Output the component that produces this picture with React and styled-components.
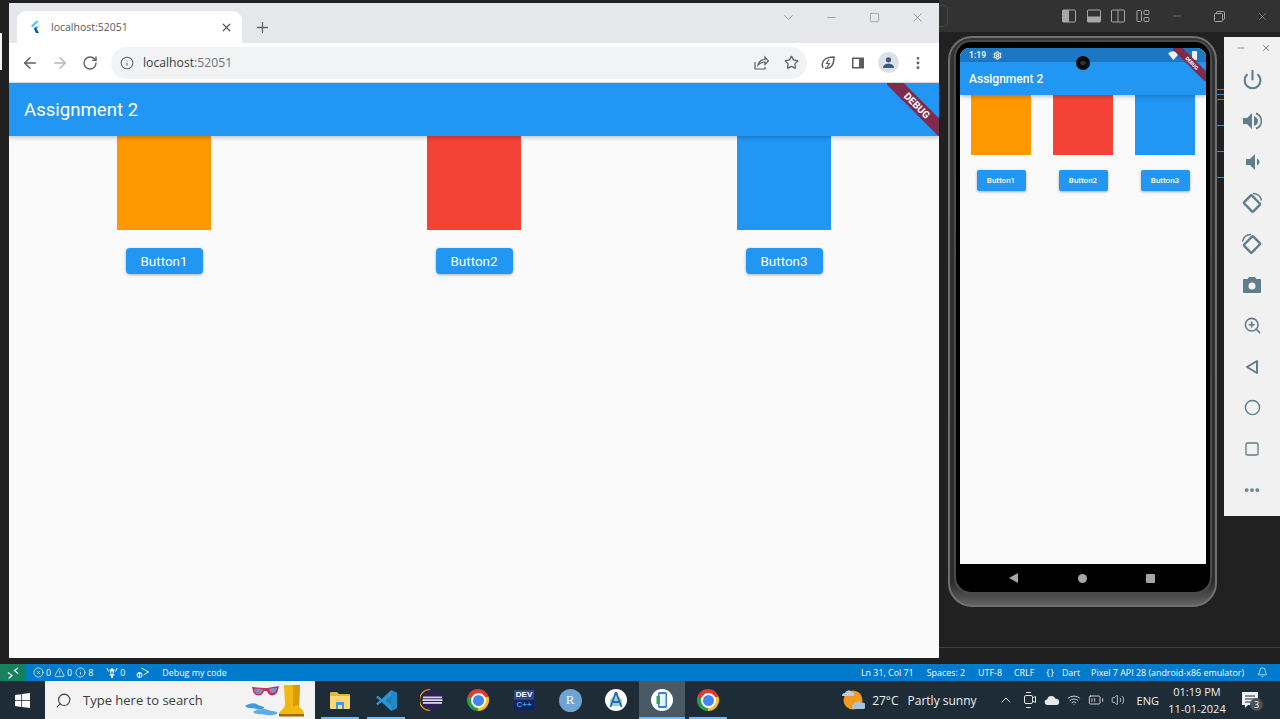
import styled, { createGlobalStyle } from 'styled-components'
import {
  ArrowLeft, ArrowRight, RotateCw, Info, Star, X, Plus, ChevronDown, ChevronUp, Minus, Square,
  EllipsisVertical, Ellipsis, Power, ZoomIn, Circle, Triangle, Search, XCircle, AlertTriangle,
  Bell, Volume2, BatteryMedium, Wifi, Settings,
} from 'lucide-react'

const Global = createGlobalStyle`
  html, body { margin: 0; padding: 0; background: #202020; }
  * { box-sizing: border-box; }
`

const Page = styled.div`
  width: 1280px;
  height: 719px;
  display: flex;
  flex-direction: column;
  overflow: hidden;
  font-family: Roboto, sans-serif;
`
const Workspace = styled.div`
  height: 664px;
  flex: none;
  display: flex;
  background: #202020;
`
const Gutter = styled.div`
  width: 9px;
  flex: none;
  padding-top: 33px;
`
const GutterMark = styled.div`
  width: 2px;
  height: 37px;
  background: #f2f2f2;
`

/* chrome window */
const Browser = styled.div`
  width: 930px;
  height: 655px;
  flex: none;
  margin-top: 3px;
  display: flex;
  flex-direction: column;
  background: #fafafa;
`
const TabStrip = styled.div`
  height: 40px;
  flex: none;
  display: flex;
  align-items: flex-end;
  padding-left: 8px;
  background: #e6e7ea;
  color: #5f6368;
`
const Tab = styled.div`
  width: 225px;
  height: 32px;
  display: flex;
  align-items: center;
  padding: 0 9px 0 11px;
  background: #fff;
  border-radius: 9px 9px 0 0;
  font: 10.5px 'Open Sans', sans-serif;
  color: #555a5f;
`
const TabTitle = styled.span`
  flex: 1;
  margin-left: 9px;
`
const NewTab = styled.div`
  width: 40px;
  height: 32px;
  display: flex;
  align-items: center;
  justify-content: center;
`
const WindowControls = styled.div`
  margin-left: auto;
  height: 100%;
  display: flex;
  align-items: flex-start;
  padding: 6px 0 0;
  color: #7f8185;
`
const WindowButton = styled.div`
  width: 43px;
  height: 16px;
  display: flex;
  align-items: center;
  justify-content: center;
`
const Toolbar = styled.div`
  height: 40px;
  flex: none;
  display: flex;
  align-items: center;
  padding-left: 6px;
  background: #fff;
  border-bottom: 1px solid #d4d6d9;
  color: #5f6368;
`
const ToolButton = styled.div`
  width: 30px;
  height: 30px;
  display: flex;
  align-items: center;
  justify-content: center;
  color: ${p => p.$off ? '#b4b6b9' : '#5b5e62'};
`
const Omnibox = styled.div`
  width: 696px;
  height: 32px;
  margin: 0 6px;
  display: flex;
  align-items: center;
  padding: 0 1px 0 9px;
  background: #f1f3f4;
  border-radius: 16px;
`
const Url = styled.div`
  flex: 1;
  margin-left: 9px;
  font: 12.2px 'Open Sans', sans-serif;
  color: #3a3d40;
  span { color: #6f7275; }
`
const Avatar = styled.div`
  width: 21px;
  height: 21px;
  display: flex;
  align-items: center;
  justify-content: center;
  border-radius: 50%;
  background: #dde1e7;
`

const FlutterView = styled.div`
  flex: 1;
  display: flex;
  flex-direction: column;
  position: relative;
  overflow: hidden;
`
const AppBar = styled.div`
  height: ${p => p.$small ? 33 : 53}px;
  flex: none;
  display: flex;
  align-items: center;
  padding-left: ${p => p.$small ? 9 : 15}px;
  background: #2196f3;
  color: #fff;
  font-size: ${p => p.$small ? 12 : 18.6}px;
  font-weight: ${p => p.$small ? 500 : 400};
  box-shadow: 0 2px 4px rgba(0, 0, 0, .2);
  z-index: 1;
`
const BoxRow = styled.div`
  display: flex;
  justify-content: space-around;
`
const Column = styled.div`
  display: flex;
  flex-direction: column;
  align-items: center;
`
const Swatch = styled.div`
  width: ${p => p.$small ? 60 : 94}px;
  height: ${p => p.$small ? 60 : 94}px;
  background: ${p => p.$color};
`
const AppButton = styled.div`
  width: ${p => p.$small ? 49 : 77}px;
  height: ${p => p.$small ? 21 : 26}px;
  margin-top: ${p => p.$small ? 15 : 18}px;
  display: flex;
  align-items: center;
  justify-content: center;
  background: #2196f3;
  border-radius: ${p => p.$small ? 2 : 4}px;
  color: #fff;
  font-size: ${p => p.$small ? 8 : 13.4}px;
  font-weight: ${p => p.$small ? 500 : 400};
  box-shadow: 0 1px 3px rgba(0, 0, 0, .3);
`
const BannerCorner = styled.div`
  position: absolute;
  top: 0;
  right: 0;
  width: ${p => p.$small ? 33 : 52}px;
  height: ${p => p.$small ? 33 : 53}px;
  overflow: hidden;
  z-index: 2;
`
const Banner = styled.div`
  position: absolute;
  top: ${p => p.$small ? 11 : 15.5}px;
  left: ${p => p.$small ? -11 : -20}px;
  width: ${p => p.$small ? 60 : 100}px;
  height: ${p => p.$small ? 8 : 13}px;
  line-height: ${p => p.$small ? 8 : 13}px;
  text-align: center;
  transform: rotate(45deg);
  background: #7f2b4e;
  color: #fff;
  font-size: ${p => p.$small ? 5 : 10}px;
  font-weight: 700;
`

/* vs code chrome around the emulator */
const RightPane = styled.div`
  flex: 1;
  display: flex;
  flex-direction: column;
`
const IdeTitleBar = styled.div`
  height: 32px;
  flex: none;
  display: flex;
  align-items: center;
  background: #323232;
  color: #a8a8a8;
`
const IdeSearchEnd = styled.div`
  width: 9px;
  height: 22px;
  margin-right: 109px;
  border: 1px solid #454545;
  border-left: 0;
  border-radius: 0 5px 5px 0;
`
const LayoutButton = styled.div`
  width: 24.5px;
  display: flex;
  justify-content: center;
`
const IdeWindowButton = styled.div`
  width: 43px;
  display: flex;
  justify-content: center;
  margin-left: ${p => p.$first ? 'auto' : 0};
`
const Stage = styled.div`
  height: 616px;
  flex: none;
  display: flex;
  align-items: flex-start;
  padding: 4px 0 0 9px;
  background: #212121;
  border-bottom: 1px solid #424242;
`
const Phone = styled.div`
  width: 269px;
  height: 571px;
  flex: none;
  padding: 4px 5px 13px 6px;
  border: 2px solid #707070;
  border-radius: 24px;
  background: linear-gradient(#333, #2c2c2c 96%, #626262);
`
const Bezel = styled.div`
  height: 100%;
  display: flex;
  flex-direction: column;
  padding: 6px 4px 0;
  background: #000;
  border-radius: 15px;
  box-shadow: 0 0 0 2px #4a4a4a;
`
const Screen = styled.div`
  height: 516px;
  flex: none;
  display: flex;
  flex-direction: column;
  position: relative;
  overflow: hidden;
  background: #fafafa;
  border-radius: 9px 9px 0 0;
`
const PhoneStatus = styled.div`
  height: 14px;
  flex: none;
  display: flex;
  align-items: center;
  gap: 7px;
  padding: 0 9px;
  background: #1c78c4;
  color: #e4eef6;
  font-size: 8.5px;
  font-weight: 700;
`
const StatusRight = styled.div`
  margin-left: auto;
  display: flex;
  align-items: center;
  gap: 3px;
`
const PhoneBattery = styled.div`
  width: 5px;
  height: 9px;
  background: #f2f2f2;
  border-radius: 1px;
`
const Camera = styled.div`
  position: absolute;
  top: 8px;
  left: 116px;
  width: 14px;
  height: 14px;
  border-radius: 50%;
  background: #0b0b0b;
  z-index: 3;
  &::after {
    content: '';
    position: absolute;
    inset: 5px 4px;
    border-radius: 50%;
    background: #33302a;
  }
`
const PhoneNav = styled.div`
  flex: 1;
  display: flex;
  align-items: center;
  justify-content: space-between;
  padding: 0 51px 0 49px;
  color: #a6a6a6;
`
const NavDot = styled.div`
  width: 9px;
  height: 9px;
  background: #a6a6a6;
  border-radius: ${p => p.$round ? '50%' : '1px'};
`
const NavBack = styled.div`
  width: 0;
  height: 0;
  border-style: solid;
  border-width: 5px 9px 5px 0;
  border-color: transparent #a6a6a6 transparent transparent;
`
const Minimap = styled.div`
  width: 7px;
  flex: none;
  padding-top: 53px;
  display: flex;
  flex-direction: column;
`
const MapMark = styled.div`
  height: 1px;
  margin-top: ${p => p.$gap}px;
  background: ${p => p.$color || '#3f86cc'};
`
const EmulatorPanel = styled.div`
  width: 56px;
  height: 479px;
  flex: none;
  margin-top: 1px;
  display: flex;
  flex-direction: column;
  align-items: center;
  background: #f1f1f1;
  color: #5f7d8c;
`
const PanelHead = styled.div`
  width: 100%;
  height: 22px;
  flex: none;
  display: flex;
  align-items: center;
  justify-content: space-between;
  padding: 0 9px 0 12px;
  color: #6f8794;
`
const PanelButton = styled.div`
  height: 41px;
  flex: none;
  display: flex;
  align-items: center;
  justify-content: center;
  &:first-of-type { margin-top: 1px; }
`

/* bottom bars */
const StatusBar = styled.div`
  height: 17px;
  flex: none;
  display: flex;
  align-items: center;
  background: #007acc;
  color: #fff;
  font: 8.9px 'Open Sans', sans-serif;
`
const RemoteTag = styled.div`
  width: 26px;
  height: 100%;
  display: flex;
  align-items: center;
  justify-content: center;
  background: #16825d;
`
const StatusLeft = styled.div`
  display: flex;
  align-items: center;
  margin-left: 7px;
`
const StatusItem = styled.span`
  display: inline-flex;
  align-items: center;
  gap: ${p => p.$gap ?? 2}px;
  margin-left: ${p => p.$ml || 0}px;
  white-space: nowrap;
`
const Braces = styled.span`
  letter-spacing: 1px;
`
const StatusEnd = styled.div`
  margin-left: auto;
  padding-right: 12px;
  display: flex;
  align-items: center;
`
const Taskbar = styled.div`
  height: 38px;
  flex: none;
  display: flex;
  align-items: stretch;
  background: #1d2c37;
  color: #f0f0f0;
  font-family: 'Open Sans', sans-serif;
`
const StartButton = styled.div`
  width: 45px;
  display: flex;
  align-items: center;
  justify-content: center;
`
const SearchBox = styled.div`
  width: 270px;
  margin-right: 2px;
  display: flex;
  align-items: center;
  padding: 0 8px 0 10px;
  background: #f3f3f3;
  color: #3c3c3c;
  font-size: 13px;
`
const SearchText = styled.span`
  flex: 1;
  margin-left: 11px;
`
const TaskItem = styled.div`
  width: 46px;
  display: flex;
  align-items: center;
  justify-content: center;
  position: relative;
  background: ${p => p.$active ? '#4a5a64' : 'transparent'};
  &::after {
    content: '';
    display: ${p => p.$open ? 'block' : 'none'};
    position: absolute;
    left: ${p => p.$active ? 0 : 4}px;
    right: ${p => p.$active ? 0 : 4}px;
    bottom: 0;
    height: 2px;
    background: #76b9ed;
  }
`
const ChromeDisc = styled.div`
  width: 22px;
  height: 22px;
  display: flex;
  align-items: center;
  justify-content: center;
  border-radius: 50%;
  background: conic-gradient(from 290deg, #e33b2e 0 140deg, #fbc02d 140deg 250deg, #2f9e44 250deg 360deg);
  &::after {
    content: '';
    width: 11px;
    height: 11px;
    border-radius: 50%;
    border: 2px solid #fff;
    background: #4285f4;
  }
`
const DevTile = styled.div`
  width: 22px;
  height: 22px;
  display: flex;
  flex-direction: column;
  align-items: center;
  background: linear-gradient(#33438a 50%, #12235c 50%);
  border: 1px solid #1a2a60;
  color: #fff;
  font: 700 8px/10px 'Liberation Sans', sans-serif;
  span { color: #28a7e8; }
`
const RBall = styled.div`
  width: 23px;
  height: 23px;
  display: flex;
  align-items: center;
  justify-content: center;
  border-radius: 50%;
  background: #6fa3d4;
  color: #f2f6fa;
  font: 13px 'Liberation Serif', serif;
`
const WhiteDisc = styled.div`
  width: 22px;
  height: 22px;
  display: flex;
  align-items: center;
  justify-content: center;
  border-radius: 50%;
  background: #fff;
`
const Tray = styled.div`
  margin-left: auto;
  display: flex;
  align-items: center;
`
const TrayText = styled.span`
  margin-left: ${p => p.$ml || 0}px;
  white-space: nowrap;
  color: #f0f0f0;
  font-size: ${p => p.$size || 12}px;
`
const TrayIcon = styled.div`
  width: 22px;
  margin-left: ${p => p.$ml || 0}px;
  display: flex;
  justify-content: center;
  color: #e6e6e6;
`
const Clock = styled.div`
  width: 66px;
  margin-left: 5px;
  text-align: center;
  font-size: 11px;
  line-height: 17px;
`
const Notify = styled.div`
  width: 40px;
  position: relative;
  display: flex;
  justify-content: center;
  margin-right: 10px;
`
const NotifyCount = styled.div`
  position: absolute;
  top: 8px;
  left: 20px;
  width: 13px;
  height: 13px;
  border-radius: 50%;
  background: #4a4f53;
  color: #fff;
  font-size: 9px;
  line-height: 13px;
  text-align: center;
`

const FlutterLogo = () => (
  <svg width="14" height="14" viewBox="0 0 14 14">
    <polygon points="8,1 11,1 4.5,7.5 3,6" fill="#4fc3f7" />
    <polygon points="8,6.5 11,6.5 7.5,10 6,8.5" fill="#29b6f6" />
    <polygon points="6,8.5 7.5,7 11,13 8,13" fill="#01579b" />
  </svg>
)

const ShareIcon = () => (
  <svg width="16" height="16" viewBox="0 0 16 16" fill="none" stroke="currentColor" strokeWidth="1.2">
    <path d="M2 7v7h10v-2" />
    <path d="M5 10c1-4 4-5.500 7-5.500V2l3.500 4L12 9.500V7c-3 0-5 1-7 3z" />
  </svg>
)
const LeafIcon = () => (
  <svg width="16" height="16" viewBox="0 0 16 16" fill="none" stroke="currentColor" strokeWidth="1.5">
    <path d="M3 13C1 8 3 2 14 2c0 9-4 12-9 11" />
    <path d="M9 4.500L6.500 8.500h3L7 12" strokeWidth="1.200" />
  </svg>
)
const SidePanelIcon = () => (
  <svg width="14" height="14" viewBox="0 0 14 14">
    <rect x="1" y="1.500" width="12" height="11" fill="#5b5e62" />
    <rect x="2.500" y="3" width="5.500" height="8" fill="#fff" />
  </svg>
)
const PersonIcon = () => (
  <svg width="13" height="13" viewBox="0 0 13 13" fill="#3f5a78">
    <circle cx="6.500" cy="3.800" r="2.600" />
    <path d="M1 12c0-3 2.500-4.200 5.500-4.200S12 9 12 12z" />
  </svg>
)

const LayoutIcon = ({ kind }) => (
  <svg width="14" height="14" viewBox="0 0 14 14" fill="none" stroke="currentColor">
    {kind === 'grid' ? (
      <>
        <rect x="1" y="1.500" width="4.500" height="11" rx="1" />
        <rect x="8" y="1.500" width="5" height="4" rx="1" />
        <rect x="8" y="8.500" width="5" height="4" rx="1" />
      </>
    ) : (
      <>
        <rect x=".5" y="1" width="13" height="12" rx="1" />
        {kind === 'left' && <rect x="1" y="1.500" width="5.500" height="11" fill="currentColor" />}
        {kind === 'bottom' && <rect x="1" y="8" width="12" height="4.500" fill="currentColor" />}
        {kind === 'split' && <line x1="7" y1="1" x2="7" y2="13" />}
      </>
    )}
  </svg>
)
const RestoreIcon = () => (
  <svg width="11" height="11" viewBox="0 0 11 11" fill="none" stroke="currentColor">
    <rect x=".5" y="2.500" width="8" height="8" rx="1" />
    <path d="M2.500 2.500v-1a1 1 0 0 1 1-1h6a1 1 0 0 1 1 1v6a1 1 0 0 1-1 1h-1" />
  </svg>
)

const PhoneWifi = () => (
  <svg width="11" height="9" viewBox="0 0 11 9" fill="#f2f2f2">
    <path d="M0 2.500C3 -.5 8 -.5 11 2.500L5.500 9z" />
  </svg>
)

const SpeakerIcon = ({ loud }) => (
  <svg width="20" height="20" viewBox="0 0 20 20" fill="currentColor">
    <path d={loud ? 'M1 7v6h4l5 5V2L5 7z' : 'M4 7v6h4l5 5V2L8 7z'} />
    {loud
      ? <path d="M12 5v10c3-1 4-3 4-5s-1-4-4-5zM14 1.500v2c3 1 4.500 3.500 4.500 6.500s-1.500 5.500-4.500 6.500v2c4-1 6-4.500 6-8.500s-2-7.500-6-8.500z" />
      : <path d="M15 6.500v7c1.500-.8 2.500-2 2.500-3.500S16.500 7.300 15 6.500z" />}
  </svg>
)
const RotateIcon = ({ flip }) => (
  <svg width="22" height="22" viewBox="0 0 22 22" fill="none" stroke="currentColor" strokeWidth="2.400"
    style={flip ? { transform: 'scaleX(-1)' } : undefined}>
    <rect x="5.500" y="5" width="11" height="13" rx="1" transform="rotate(-45 11 11.500)" />
    <path d="M12 1.500c4 0 7.500 2.500 8.500 7" strokeWidth="1.500" />
  </svg>
)
const CameraIcon = () => (
  <svg width="20" height="20" viewBox="0 0 20 20">
    <path fill="currentColor" d="M7 2L5.500 4H2a1 1 0 0 0-1 1v12a1 1 0 0 0 1 1h16a1 1 0 0 0 1-1V5a1 1 0 0 0-1-1h-3.500L13 2z" />
    <circle cx="10" cy="11" r="3.500" fill="#f1f1f1" />
  </svg>
)
const NavOutline = () => (
  <svg width="18" height="18" viewBox="0 0 18 18" fill="none" stroke="currentColor" strokeWidth="2">
    <path d="M14 3v12L4 9z" strokeLinejoin="round" />
  </svg>
)

const RemoteIcon = () => (
  <svg width="12" height="12" viewBox="0 0 12 12" fill="none" stroke="#fff" strokeWidth="1.200">
    <path d="M1 5.500l4 3-3.500 3M11 1L7.500 3.500 11 6.500" />
  </svg>
)
const PortsIcon = () => (
  <svg width="12" height="12" viewBox="0 0 12 12" fill="none" stroke="#fff">
    <path d="M1 1l1.500 3.500M11 1L9.500 4.500M4 2.500l2 8.500 2-8.500M3.500 8h5" />
    <circle cx="6" cy="3" r="1.200" fill="#fff" />
  </svg>
)
const DebugIcon = () => (
  <svg width="13" height="12" viewBox="0 0 13 12" fill="none" stroke="#fff">
    <path d="M5.500 1l7 4-5 3" />
    <circle cx="3.500" cy="8" r="2.500" />
    <path d="M1 6.500h5M3.500 5.500v5" />
  </svg>
)

const WinLogo = () => (
  <svg width="15" height="15" viewBox="0 0 15 15" fill="#fff">
    <path d="M0 2.100l6.300-.9v6H0zM7.100 1.100L15 0v7.200H7.100zM0 8h6.300v6L0 13.100zM7.100 8H15v7l-7.900-1.100z" />
  </svg>
)
const PromoArt = () => (
  <svg width="62" height="36" viewBox="0 0 62 36">
    <path d="M7 5l12 1h3l12-2-1 4c-1 6-8 7-10 3l-1-2h-3l-1 2c-2 4-9 3-10-2z" fill="#c2335b" />
    <path d="M9 7.500c2-1 7-1 9 0-1 6-8 6-9 0zM24 7c2-1 6-1 8-1-1 6-7 7-8 1z" fill="#7f8fc0" />
    <path d="M0 24c4-3 10-4 13-1l6 2c1 2-3 3-7 2s-9 0-12-3z" fill="#3f9bdc" />
    <path d="M8 30c4-3 12-4 15-2l9 2c2 2-4 4-10 3s-11 0-14-3z" fill="#5aaee6" />
    <path d="M39 3h16l-1 22c3 2 5 4 5 7l-1 2H37c-2 0-3-1-3-3 2-3 5-4 6-8z" fill="#f2b90f" />
    <path d="M48 3h7l-1 20-6 1z" fill="#d99a06" />
    <rect x="34" y="32" width="25" height="2.500" fill="#9a6c04" />
  </svg>
)
const FolderIcon = () => (
  <svg width="22" height="20" viewBox="0 0 22 20">
    <path fill="#e8b53a" d="M1 3a1 1 0 0 1 1-1h6l2 2h10a1 1 0 0 1 1 1v3H1z" />
    <path fill="#fcd772" d="M1 6h20v12a1 1 0 0 1-1 1H2a1 1 0 0 1-1-1z" />
    <path fill="#3b9edb" d="M7 12h8v7h-2v-4H9v4H7z" />
  </svg>
)
const VsCodeIcon = () => (
  <svg width="23" height="23" viewBox="0 0 24 24">
    <path fill="#2b96d6" d="M17 1l6 3v16l-6 3L7 13.500l-4 3.500-2-1.500L5 12 1 8.500 3 7l4 3.500z" />
    <path fill="#1d7cba" d="M17 7l-6 5 6 5z" />
    <path fill="#0f6fb0" d="M17 1l6 3v16l-6 3z" opacity=".35" />
  </svg>
)
const EclipseIcon = () => (
  <svg width="24" height="24" viewBox="0 0 24 24">
    <circle cx="12.500" cy="12" r="10.500" fill="#2c2255" />
    <path d="M10 1.500a10.500 10.500 0 0 0 0 21" fill="none" stroke="#f7941e" strokeWidth="1.200" />
    <rect x="3" y="8.500" width="19" height="1.800" fill="#d9d4ea" />
    <rect x="2.500" y="11.200" width="20" height="1.800" fill="#d9d4ea" />
    <rect x="3" y="14" width="19" height="1.800" fill="#d9d4ea" />
  </svg>
)
const StudioGlyph = () => (
  <svg width="20" height="20" viewBox="0 0 20 20" fill="none">
    <path d="M4 10c3-5 9-5 12 0v6H4z" fill="#6fcf97" opacity=".75" />
    <path d="M10 2L4.500 17M10 2l5.500 15M6 12h8" stroke="#2a62c9" strokeWidth="1.800" />
    <circle cx="10" cy="4" r="1.600" fill="#2a62c9" />
  </svg>
)
const DeviceGlyph = () => (
  <svg width="14" height="16" viewBox="0 0 14 16">
    <rect x="3" y="0" width="9" height="16" rx="1.500" fill="#3b7fd4" />
    <rect x="4.500" y="2" width="6" height="12" fill="#e8f0fa" />
    <rect x="1.500" y="4" width="3.500" height="8" fill="#2fa36b" />
  </svg>
)
const WeatherIcon = () => (
  <svg width="24" height="24" viewBox="0 0 24 24">
    <circle cx="12" cy="12" r="9.500" fill="#f29a1f" />
    <path fill="#b9cde3" d="M1 8a3 3 0 0 1 3-3 4 4 0 0 1 7-1 3 3 0 0 1 2 4z" />
    <path fill="#a7c2de" d="M12 21a3 3 0 0 1 1-5 4 4 0 0 1 7-1 3 3 0 0 1 3 6z" />
  </svg>
)
const MeetIcon = () => (
  <svg width="14" height="18" viewBox="0 0 14 18" fill="none" stroke="currentColor">
    <rect x="1.500" y="4.500" width="8" height="8" rx="1.500" />
    <path d="M9.500 7l3-1.500v6L9.500 10zM3 1.500h5M3 16.500h5" />
  </svg>
)
const CloudIcon = () => (
  <svg width="16" height="11" viewBox="0 0 18 12" fill="#e8e8e8">
    <path d="M4 11a3 3 0 0 1-.5-6A5 5 0 0 1 13 4a3.500 3.500 0 0 1 1 7z" />
  </svg>
)
const ChatIcon = () => (
  <svg width="20" height="20" viewBox="0 0 20 20" fill="#f0f0f0">
    <path d="M2 2h16v13H8l-3 3v-3H2z" />
    <path d="M5 6h10M5 9h10M5 12h6" stroke="#1d2c37" strokeWidth="1" />
  </svg>
)

const boxes = [
  { name: 'Button1', color: '#ff9800' },
  { name: 'Button2', color: '#f44336' },
  { name: 'Button3', color: '#2196f3' },
]
const mapMarks = [0, 4, 4, 25, 25, 25]

const App = () => {
  return (
    <Page>
      <Global />
      <Workspace>
        <Gutter><GutterMark /></Gutter>
        <Browser>
          <TabStrip>
            <Tab>
              <FlutterLogo />
              <TabTitle>localhost:52051</TabTitle>
              <X size={13} strokeWidth={2.200} />
            </Tab>
            <NewTab><Plus size={17} strokeWidth={1.800} /></NewTab>
            <WindowControls>
              <WindowButton><ChevronDown size={15} strokeWidth={1.200} /></WindowButton>
              <WindowButton><Minus size={13} strokeWidth={1.200} /></WindowButton>
              <WindowButton><Square size={11} strokeWidth={1.300} /></WindowButton>
              <WindowButton><X size={15} strokeWidth={1.200} /></WindowButton>
            </WindowControls>
          </TabStrip>
          <Toolbar>
            <ToolButton><ArrowLeft size={18} strokeWidth={2} /></ToolButton>
            <ToolButton $off><ArrowRight size={18} strokeWidth={2} /></ToolButton>
            <ToolButton><RotateCw size={16} strokeWidth={2} /></ToolButton>
            <Omnibox>
              <Info size={14} strokeWidth={1.800} />
              <Url>localhost<span>:52051</span></Url>
              <ToolButton><ShareIcon /></ToolButton>
              <ToolButton><Star size={15} strokeWidth={2} /></ToolButton>
            </Omnibox>
            <ToolButton><LeafIcon /></ToolButton>
            <ToolButton><SidePanelIcon /></ToolButton>
            <ToolButton><Avatar><PersonIcon /></Avatar></ToolButton>
            <ToolButton><EllipsisVertical size={16} strokeWidth={2.200} /></ToolButton>
          </Toolbar>
          <FlutterView>
            <AppBar>Assignment 2</AppBar>
            <BoxRow>
              {boxes.map(b => (
                <Column key={b.name}>
                  <Swatch $color={b.color} />
                  <AppButton>{b.name}</AppButton>
                </Column>
              ))}
            </BoxRow>
            <BannerCorner><Banner>DEBUG</Banner></BannerCorner>
          </FlutterView>
        </Browser>
        <RightPane>
          <IdeTitleBar>
            <IdeSearchEnd />
            <LayoutButton><LayoutIcon kind="left" /></LayoutButton>
            <LayoutButton><LayoutIcon kind="bottom" /></LayoutButton>
            <LayoutButton><LayoutIcon kind="split" /></LayoutButton>
            <LayoutButton><LayoutIcon kind="grid" /></LayoutButton>
            <IdeWindowButton $first><Minus size={12} strokeWidth={1} /></IdeWindowButton>
            <IdeWindowButton><RestoreIcon /></IdeWindowButton>
            <IdeWindowButton><X size={13} strokeWidth={1} /></IdeWindowButton>
          </IdeTitleBar>
          <Stage>
            <Phone>
              <Bezel>
                <Screen>
                  <Camera />
                  <PhoneStatus>
                    1:19
                    <Settings size={9} strokeWidth={3} />
                    <StatusRight>
                      <PhoneWifi />
                      <Triangle size={7} fill="#f2f2f2" strokeWidth={0} />
                      <PhoneBattery />
                    </StatusRight>
                  </PhoneStatus>
                  <AppBar $small>Assignment 2</AppBar>
                  <BoxRow>
                    {boxes.map(b => (
                      <Column key={b.name}>
                        <Swatch $small $color={b.color} />
                        <AppButton $small>{b.name}</AppButton>
                      </Column>
                    ))}
                  </BoxRow>
                  <BannerCorner $small><Banner $small>DEBUG</Banner></BannerCorner>
                </Screen>
                <PhoneNav>
                  <NavBack />
                  <NavDot $round />
                  <NavDot />
                </PhoneNav>
              </Bezel>
            </Phone>
            <Minimap>
              {mapMarks.map((gap, i) => <MapMark key={i} $gap={gap} />)}
            </Minimap>
            <EmulatorPanel>
              <PanelHead>
                <Minus size={10} strokeWidth={2} />
                <X size={10} strokeWidth={2.400} />
              </PanelHead>
              <PanelButton><Power size={21} strokeWidth={2.400} /></PanelButton>
              <PanelButton><SpeakerIcon loud /></PanelButton>
              <PanelButton><SpeakerIcon /></PanelButton>
              <PanelButton><RotateIcon /></PanelButton>
              <PanelButton><RotateIcon flip /></PanelButton>
              <PanelButton><CameraIcon /></PanelButton>
              <PanelButton><ZoomIn size={19} strokeWidth={2} /></PanelButton>
              <PanelButton><NavOutline /></PanelButton>
              <PanelButton><Circle size={17} strokeWidth={2} /></PanelButton>
              <PanelButton><Square size={16} strokeWidth={2} /></PanelButton>
              <PanelButton><Ellipsis size={18} strokeWidth={3} /></PanelButton>
            </EmulatorPanel>
          </Stage>
        </RightPane>
      </Workspace>

      <StatusBar>
        <RemoteTag><RemoteIcon /></RemoteTag>
        <StatusLeft>
          <StatusItem><XCircle size={11} strokeWidth={1.500} />0</StatusItem>
          <StatusItem $ml={3}><AlertTriangle size={11} strokeWidth={1.500} />0</StatusItem>
          <StatusItem $ml={3}><Info size={11} strokeWidth={1.500} />8</StatusItem>
          <StatusItem $ml={13}><PortsIcon />0</StatusItem>
          <StatusItem $ml={11}><DebugIcon /></StatusItem>
          <StatusItem $ml={13}>Debug my code</StatusItem>
        </StatusLeft>
        <StatusEnd>
          <StatusItem>Ln 31, Col 71</StatusItem>
          <StatusItem $ml={13}>Spaces: 2</StatusItem>
          <StatusItem $ml={13}>UTF-8</StatusItem>
          <StatusItem $ml={12}>CRLF</StatusItem>
          <StatusItem $ml={12} $gap={7}><Braces>{'{}'}</Braces>Dart</StatusItem>
          <StatusItem $ml={11}>Pixel 7 API 28 (android-x86 emulator)</StatusItem>
          <StatusItem $ml={13}><Bell size={11} strokeWidth={1.500} /></StatusItem>
        </StatusEnd>
      </StatusBar>

      <Taskbar>
        <StartButton><WinLogo /></StartButton>
        <SearchBox>
          <Search size={17} strokeWidth={1.500} style={{ transform: 'scaleX(-1)' }} />
          <SearchText>Type here to search</SearchText>
          <PromoArt />
        </SearchBox>
        <TaskItem $open><FolderIcon /></TaskItem>
        <TaskItem $open><VsCodeIcon /></TaskItem>
        <TaskItem><EclipseIcon /></TaskItem>
        <TaskItem><ChromeDisc /></TaskItem>
        <TaskItem><DevTile>DEV<span>C++</span></DevTile></TaskItem>
        <TaskItem><RBall>R</RBall></TaskItem>
        <TaskItem><WhiteDisc><StudioGlyph /></WhiteDisc></TaskItem>
        <TaskItem $active $open><WhiteDisc><DeviceGlyph /></WhiteDisc></TaskItem>
        <TaskItem $open><ChromeDisc /></TaskItem>
        <Tray>
          <WeatherIcon />
          <TrayText $ml={7}>27°C</TrayText>
          <TrayText $ml={9}>Partly sunny</TrayText>
          <TrayIcon $ml={18}><ChevronUp size={16} strokeWidth={1.500} /></TrayIcon>
          <TrayIcon $ml={2}><MeetIcon /></TrayIcon>
          <TrayIcon><CloudIcon /></TrayIcon>
          <TrayIcon><Wifi size={14} strokeWidth={1.500} /></TrayIcon>
          <TrayIcon><BatteryMedium size={16} strokeWidth={1.300} /></TrayIcon>
          <TrayIcon><Volume2 size={14} strokeWidth={1.300} /></TrayIcon>
          <TrayText $ml={8} $size={11}>ENG</TrayText>
          <Clock>01:19 PM<br />11-01-2024</Clock>
          <Notify>
            <ChatIcon />
            <NotifyCount>3</NotifyCount>
          </Notify>
        </Tray>
      </Taskbar>
    </Page>
  )
}

export default App
